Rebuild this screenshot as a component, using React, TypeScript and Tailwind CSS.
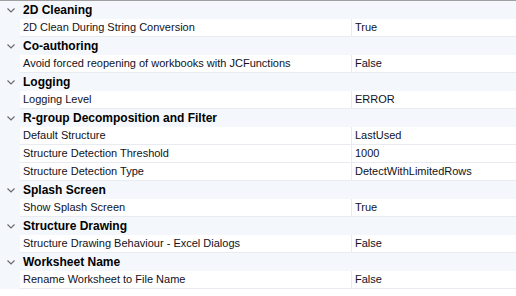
type Item = { name: string; value: string };
type Group = { title: string; items: Item[] };

const groups: Group[] = [
  { title: "2D Cleaning", items: [{ name: "2D Clean During String Conversion", value: "True" }] },
  { title: "Co-authoring", items: [{ name: "Avoid forced reopening of workbooks with JCFunctions", value: "False" }] },
  { title: "Logging", items: [{ name: "Logging Level", value: "ERROR" }] },
  {
    title: "R-group Decomposition and Filter",
    items: [
      { name: "Default Structure", value: "LastUsed" },
      { name: "Structure Detection Threshold", value: "1000" },
      { name: "Structure Detection Type", value: "DetectWithLimitedRows" },
    ],
  },
  { title: "Splash Screen", items: [{ name: "Show Splash Screen", value: "True" }] },
  { title: "Structure Drawing", items: [{ name: "Structure Drawing Behaviour - Excel Dialogs", value: "False" }] },
  { title: "Worksheet Name", items: [{ name: "Rename Worksheet to File Name", value: "False" }] },
];

function Chevron() {
  return (
    <svg width="8" height="5" viewBox="0 0 8 5" className="text-[#6b6b6b]">
      <path d="M0.5 0.5 L4 4 L7.5 0.5" fill="none" stroke="currentColor" strokeWidth="1.2" />
    </svg>
  );
}

export default function App() {
  return (
    <div
      className="w-[516px] h-[296px] bg-white border-t border-[#a0a0a0] text-[11px] text-[#111122] overflow-hidden"
      style={{ fontFamily: '"Liberation Sans", Arial, sans-serif' }}
    >
      {groups.map((g) => (
        <div key={g.title}>
          <div className="h-[18px] flex items-center bg-[#f4f7fb]">
            <div className="w-[20px] flex justify-center pl-[2px]">
              <Chevron />
            </div>
            <span className="pl-[3px] text-[12px] font-bold text-black">{g.title}</span>
          </div>
          {g.items.map((it) => (
            <div key={it.name} className="h-[18px] flex bg-[#f4f7fb]">
              <div className="w-[20px]" />
              <div className="flex-1 flex bg-white border-b border-[#e8ebf0]">
                <div className="w-[332px] pl-[3px] flex items-center border-r border-[#e8ebf0]">{it.name}</div>
                <div className="flex-1 pl-[3px] flex items-center">{it.value}</div>
              </div>
            </div>
          ))}
        </div>
      ))}
    </div>
  );
}
